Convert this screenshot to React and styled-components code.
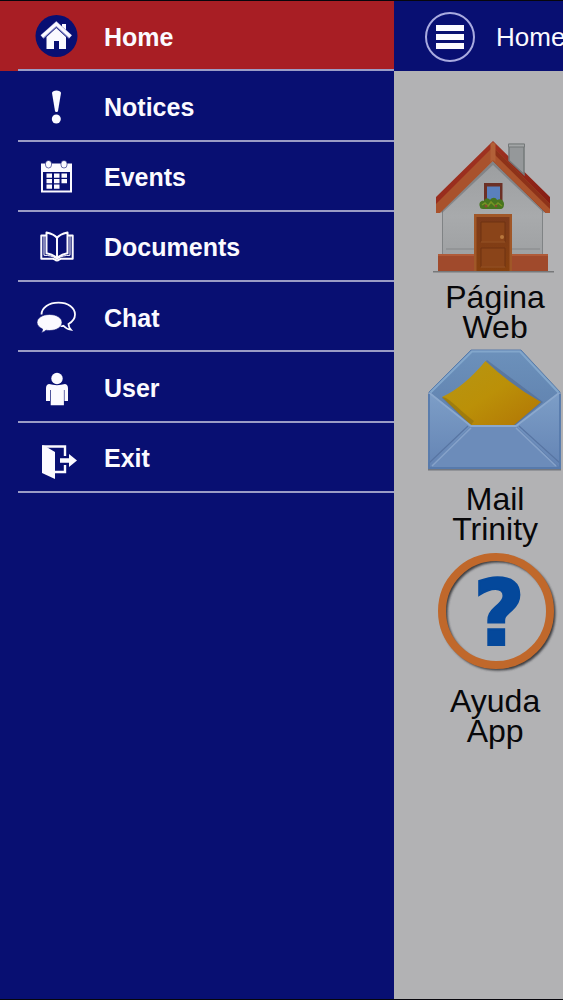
import React from 'react';
import styled, { createGlobalStyle, ThemeProvider } from 'styled-components';

const theme = {
  navy: '#080f72',
  red: '#a81e24',
  grey: '#b2b2b4',
  line: '#9a9cc6',
  black: '#07060c',
  white: '#fbfaff',
};

const GlobalStyle = createGlobalStyle`
  * {
    box-sizing: border-box;
  }

  body {
    margin: 0;
    font-family: 'Liberation Sans', Arial, Helvetica, sans-serif;
  }
`;

const Screen = styled.div`
  display: grid;
  grid-template-columns: 70% 30%;
  min-height: 100vh;
  border-top: 1px solid ${props => props.theme.black};
  border-bottom: 1px solid ${props => props.theme.black};
  overflow: hidden;
`;

const Drawer = styled.nav`
  background-color: ${props => props.theme.navy};
`;

const Menu = styled.ul`
  display: grid;
  grid-auto-rows: 1fr;
  min-height: 492px;
  list-style: none;
  margin: 0;
  padding: 0;
`;

const MenuItem = styled.li`
  display: grid;
  background-color: ${props => props.$active && props.theme.red};
  padding-left: 18px;
`;

const MenuLink = styled.a`
  display: flex;
  align-items: center;
  gap: 26px;
  padding: 4px 16px 0;
  border-bottom: 2px solid ${props => props.theme.line};
  color: ${props => props.theme.white};
  font-size: 25px;
  font-weight: bold;
  text-decoration: none;
`;

const MenuIcon = styled.svg.attrs({
  viewBox: '0 0 44 44',
  'aria-hidden': true,
})`
  flex: none;
  width: 44px;
  height: 44px;
  fill: currentColor;
`;

const Content = styled.div`
  min-width: 0;
  overflow: hidden;
  background-color: ${props => props.theme.grey};
`;

const Header = styled.header`
  display: flex;
  align-items: center;
  gap: 21px;
  height: 70px;
  padding: 2px 0 0 31px;
  background-color: ${props => props.theme.navy};
  color: ${props => props.theme.white};
`;

const MenuButton = styled.button`
  display: flex;
  flex: none;
  flex-direction: column;
  align-items: center;
  justify-content: center;
  gap: 3px;
  width: 50px;
  height: 50px;
  padding: 0;
  border: 2px solid #a9abe0;
  border-radius: 50%;
  background: none;
`;

const Bar = styled.span`
  width: 28px;
  height: 6px;
  background-color: ${props => props.theme.white};
`;

const Title = styled.h1`
  margin: 0;
  font-size: 26px;
  font-weight: normal;
  white-space: nowrap;
`;

const Tiles = styled.main`
  display: flex;
  flex-direction: column;
  align-items: flex-start;
  padding: 69px 0 0 34px;
`;

const Tile = styled.a`
  display: flex;
  flex: none;
  flex-direction: column;
  align-items: center;
  gap: 8px;
  width: 134px;
  color: #08080a;
  font-size: 32px;
  line-height: 30px;
  text-align: center;
  text-decoration: none;
`;

const TileLabel = styled.span`
  width: min-content;
`;

const TileImage = styled.svg.attrs({
  viewBox: '0 0 134 134',
  'aria-hidden': true,
})`
  width: 134px;
  height: 134px;
`;

const HomeIcon = () => (
  <MenuIcon>
    <circle cx="22.5" cy="21" r="21" fill={theme.navy} />
    <path d="M28 9h4v8l-4-4z" />
    <path d="M12.500 22 22.300 13l9.700 9v12h-7v-8h-5v8h-7.500z" />
    <path d="M8 22 22.300 9 36.500 22" fill="none" stroke="#8f91cc" strokeWidth="4.600" />
    <path d="M8 21.500 22.300 8.800 36.500 21.500" fill="none" stroke={theme.white} strokeWidth="3.200" />
  </MenuIcon>
);

const NoticesIcon = () => (
  <MenuIcon>
    <path d="M18 8c0-3.500 9-3.500 9 0l-3 18c-.3 1.300-2.700 1.300-3 0z" />
    <circle cx="22.300" cy="34" r="4.500" />
  </MenuIcon>
);

const EventsIcon = () => (
  <MenuIcon>
    <path d="M8 8.500h29v27H8z" fill="none" stroke="currentColor" strokeWidth="2" />
    <path d="M7 8h31v8H7z" />
    <g stroke={theme.navy} strokeWidth=".6">
      <rect x="11.500" y="4.500" width="6" height="7.500" rx="3" />
      <rect x="27" y="4.500" width="6" height="7.500" rx="3" />
    </g>
    <path d="M12.500 17.500h5.500v4.200h-5.500zM20 17.500h5.500v4.200H20zM27.500 17.500H33v4.200h-5.500zM12.500 23H18v4.200h-5.500zM20 23h5.500v4.200H20zM27.500 23H33v4.200h-5.500zM12.500 28.500H18v4.200h-5.500zM20 28.500h5.500v4.200H20z" />
  </MenuIcon>
);

const DocumentsIcon = () => (
  <MenuIcon>
    <g fill="none" stroke="currentColor" strokeWidth="2" strokeLinejoin="round">
      <path d="M23 12c-2-3-6-4.500-10.500-5.500v20.700c4.500 1 8.500 2.500 10.500 5.500 2-3 6-4.500 10.500-5.500V6.500C29 7.500 25 9 23 12zv21" />
      <path d="M12 9.500H7.300v23.200h11.500c2 0 2 1.800 4.200 1.800s2.200-1.800 4.200-1.800h11.500V9.500H34" />
    </g>
    <path d="M10 10v19.300c4.500 0 9 .7 13 3.700 4-3 8.500-3.700 13-3.700V10" fill="none" stroke="currentColor" />
  </MenuIcon>
);

const ChatIcon = () => (
  <MenuIcon>
    <path
      d="M7.500 18.500C7.500 11.500 15 6.700 24.500 6.700S41 11.500 41 18.500c0 4.500-3 7.500-6.500 9.500.1 2.500.8 4 2.300 5.700-3.300-.5-5.800-2-7.300-3.900-1.500.3-3 .4-5 .4"
      fill="none"
      stroke="currentColor"
      strokeWidth="1.800"
    />
    <path
      d="M15.500 18.500c7 0 12.500 3.500 12.500 8s-5.500 8-12.500 8c-1.200 0-2.500-.1-3.500-.3-1.200 1.200-2.700 2-4.700 2.300.9-1 1.300-2.200 1.300-3.500C5.300 31.500 3 29.300 3 26.500c0-4.500 5.500-8 12.500-8z"
      stroke={theme.navy}
      strokeWidth=".6"
    />
  </MenuIcon>
);

const UserIcon = () => (
  <MenuIcon>
    <circle cx="23" cy="11.500" r="5.700" />
    <path d="M15 17c5 1.500 11 1.500 16 0 2.200.5 3 2 3 4.500V34h-3.500V23h-.6v15.300H16.700V23H16v11h-4V21.500c0-2.500.8-4 3-4.500z" />
  </MenuIcon>
);

const ExitIcon = () => (
  <MenuIcon>
    <path d="M8 8.500h2l11 6.500v27L8 36z" />
    <path d="M8 9.500h23v9.500M31 28v7H21" fill="none" stroke="currentColor" strokeWidth="2.400" />
    <path d="M26 21.200h9V17l8 6.500-8 6.500v-4.200h-9z" />
  </MenuIcon>
);

const HouseImage = () => (
  <TileImage>
    <defs>
      <linearGradient id="roof" x1="0" y1="0" x2="1" y2="1">
        <stop offset="0" stopColor="#a83a26" />
        <stop offset="1" stopColor="#851c13" />
      </linearGradient>
      <linearGradient id="wall" x1="0" y1="0" x2="0" y2="1">
        <stop offset="0" stopColor="#9b9d9f" />
        <stop offset=".6" stopColor="#a8aaac" />
        <stop offset="1" stopColor="#9fa1a3" />
      </linearGradient>
      <linearGradient id="door" x1="0" y1="0" x2="0" y2="1">
        <stop offset="0" stopColor="#7c3a1b" />
        <stop offset="1" stopColor="#86400f" />
      </linearGradient>
    </defs>
    <path d="M5 131h121v1.500H5z" fill="#77787a" />
    <path d="M14 60 65 18l50 42v55H14z" fill="url(#wall)" />
    <path d="M14.500 70v44M114.500 70v44" stroke="#808385" />
    <path d="M18 109h28M84 109h28" stroke="#939597" strokeWidth="2" />
    <path d="M10 114h36v17H10zM84 114h36v17H84z" fill="#a04a2c" />
    <path d="M10 115h36M84 115h36" stroke="#b05b39" strokeWidth="2" />
    <path d="M65 1 8 57v8L65 14l57 51v-8z" fill="url(#roof)" />
    <path d="M81 4.500h15v30l-15-14z" fill="#95989a" stroke="#74797a" strokeWidth="1.500" />
    <path d="M80.500 4h16v3h-16z" fill="#a3a6a7" stroke="#747879" />
    <path d="M13 72 65 23l52 49" fill="none" stroke="#707274" strokeWidth="3" opacity=".6" />
    <path d="M65 7 8 64v9h4L65 21l53 52h4v-9z" fill="#a9522c" />
    <path d="M65 7v14l53 52h4v-9z" fill="#8d3219" />
    <path d="M65 13v8l53 52h4v-4z" fill="#ab532c" />
    <path d="M62.500 4 65 2l2.500 2v18L65 20l-2.500 2z" fill="#b26138" />
    <path d="M56 43h18.500v22H56z" fill="#6c3025" />
    <path d="M59 46.500h13V63H59z" fill="#5a80bd" />
    <path d="M52 67c-2-5 2-7 4-6 1-4 5-3 6-1 2-3 6-3 7 0 4-2 7 1 7 4s-1 5-4 5H55c-2 0-3-1-3-2z" fill="#47751f" />
    <path d="M54 65l3-2 3 3 3-4 4 4 3-3 4 3" fill="none" stroke="#779324" strokeWidth="1.500" />
    <circle cx="58" cy="66" r="1.500" fill="#8b4931" />
    <circle cx="68" cy="66" r="1.300" fill="#8b4931" />
    <path d="M46 74h38v57H46z" fill="#a05728" />
    <path d="M48.500 77h33v54h-33z" fill="url(#door)" />
    <path d="M53 82h24v20H53zM53 108h24v19H53z" fill="#8a4419" stroke="#6f3213" />
    <path d="M53 102h24M53 127h24" stroke="#a05b28" />
    <circle cx="74" cy="97" r="2" fill="#b7773d" />
  </TileImage>
);

const MailImage = () => (
  <TileImage>
    <defs>
      <linearGradient id="flap" x1="0" y1="0" x2="0" y2="1">
        <stop offset="0" stopColor="#6c91bb" />
        <stop offset="1" stopColor="#5877a6" />
      </linearGradient>
      <linearGradient id="letter" x1="0" y1="0" x2="1" y2="1">
        <stop offset="0" stopColor="#b69614" />
        <stop offset=".5" stopColor="#bb9008" />
        <stop offset="1" stopColor="#b17505" />
      </linearGradient>
      <linearGradient id="side" x1="0" y1="0" x2="0" y2="1">
        <stop offset="0" stopColor="#7d9ec7" />
        <stop offset="1" stopColor="#6484b4" />
      </linearGradient>
    </defs>
    <path d="M0 126h133v2.500H0z" fill="#73777f" />
    <path d="M1 50 43 8h50l39 42v76H1z" fill="url(#flap)" stroke="#587baa" />
    <path d="M2.500 50.500 44 9.500h48l38.500 41" fill="none" stroke="#82a6cb" strokeWidth="2" />
    <path d="M59 18l56 42-29 24H43L14 56c18-6 32-19 45-38z" fill="#4d638a" opacity=".5" />
    <path d="M57.500 19Q84 44 113 60L86 83H43L14 55Q36 45 57.500 19z" fill="url(#letter)" />
    <path d="M14 55c7 0 18 14 32 24l-3 4z" fill="#8e7010" opacity=".6" />
    <path d="M1 50l42 34L2 126H1zM132 50 88 84l44 42z" fill="url(#side)" />
    <path d="M43 84h45l43 42H2z" fill="#6c8cba" />
    <path d="M1.500 51 43 84h45l43-33" fill="none" stroke="#8ba8cd" strokeWidth="1.800" />
    <path d="M43 86 4 124M88 86l40 38" stroke="#86a2c9" strokeWidth="1.500" />
    <path d="M40 84 1 121v5M91 84l41 37v5" fill="none" stroke="#5875a3" strokeWidth="1.200" />
    <path d="M1 52v74h131V52" fill="none" stroke="#577aac" strokeWidth="1.800" />
  </TileImage>
);

const HelpImage = () => (
  <TileImage>
    <defs>
      <filter id="ringShadow" x="-10%" y="-10%" width="120%" height="120%">
        <feGaussianBlur stdDeviation="1.2" />
      </filter>
    </defs>
    <circle
      cx="70"
      cy="69"
      r="54"
      fill="none"
      stroke="#3c3c40"
      strokeWidth="7"
      filter="url(#ringShadow)"
    />
    <circle cx="68" cy="67" r="54" fill="none" stroke="#c0682b" strokeWidth="8" />
    <text
      x="71"
      y="101"
      fill="#04489b"
      stroke="#04489b"
      strokeWidth="2"
      fontFamily="'DejaVu Sans', sans-serif"
      fontSize="90"
      fontWeight="bold"
      textAnchor="middle"
    >
      ?
    </text>
  </TileImage>
);

const menuItems = [
  { label: 'Home', Icon: HomeIcon, active: true },
  { label: 'Notices', Icon: NoticesIcon },
  { label: 'Events', Icon: EventsIcon },
  { label: 'Documents', Icon: DocumentsIcon },
  { label: 'Chat', Icon: ChatIcon },
  { label: 'User', Icon: UserIcon },
  { label: 'Exit', Icon: ExitIcon },
];

const tiles = [
  { label: 'Página Web', Image: HouseImage },
  { label: 'Mail Trinity', Image: MailImage },
  { label: 'Ayuda App', Image: HelpImage },
];

const App = () => (
  <ThemeProvider theme={theme}>
    <GlobalStyle />
    <Screen>
      <Drawer>
        <Menu>
          {menuItems.map(({ label, Icon, active }) => (
            <MenuItem key={label} $active={active}>
              <MenuLink href="#" aria-current={active && 'page'}>
                <Icon />
                {label}
              </MenuLink>
            </MenuItem>
          ))}
        </Menu>
      </Drawer>
      <Content>
        <Header>
          <MenuButton type="button" aria-label="Menu">
            <Bar />
            <Bar />
            <Bar />
          </MenuButton>
          <Title>Home</Title>
        </Header>
        <Tiles>
          {tiles.map(({ label, Image }) => (
            <Tile key={label} href="#">
              <Image />
              <TileLabel>{label}</TileLabel>
            </Tile>
          ))}
        </Tiles>
      </Content>
    </Screen>
  </ThemeProvider>
);

export default App;
